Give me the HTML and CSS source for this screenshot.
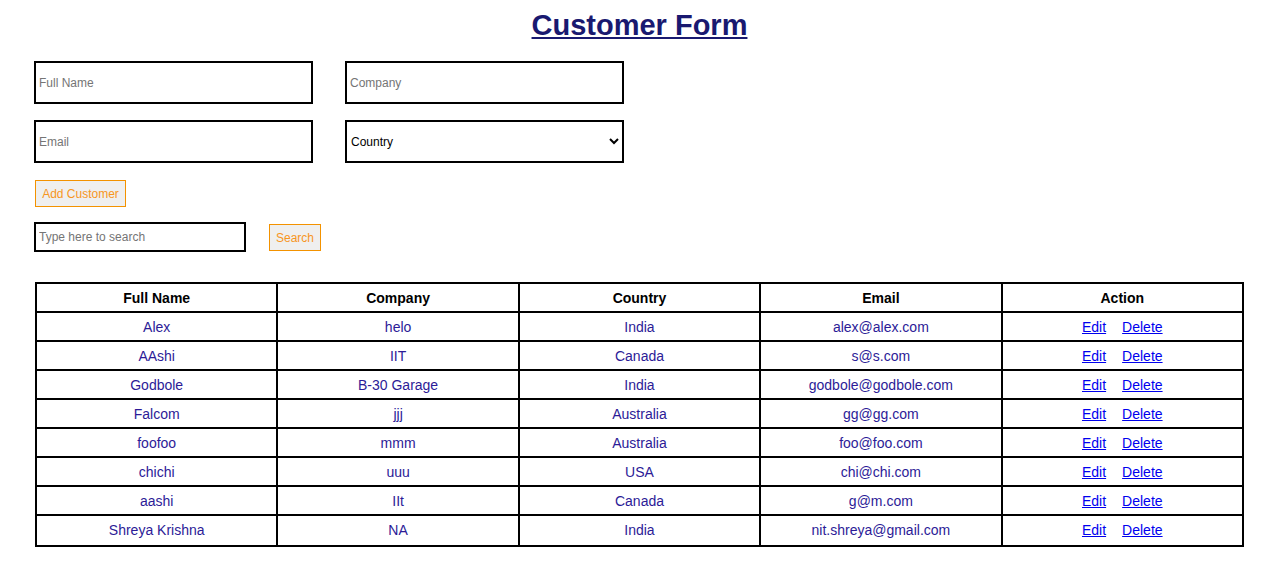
FILE: index.html
```html
<!DOCTYPE html>
<html lang="en">

<head>
    <meta charset="UTF-8">
    <meta name="viewport" content="width=device-width, initial-scale=1.0">
    <title>Customer Form</title>
    <link rel="stylesheet" href="styles.css">
</head>

<body>
    <div class="wrap">
        <h1 class="title">Customer Form</h1>
        <div class="form">
            <div class="row">
                <input type="text" placeholder="Full Name">
                <input type="text" placeholder="Company">
            </div>
            <div class="row">
                <input type="text" placeholder="Email">
                <select>
                    <option>Country</option>
                    <option>India</option>
                    <option>Canada</option>
                    <option>Australia</option>
                    <option>USA</option>
                </select>
            </div>
            <button class="btn add">Add Customer</button>
            <div class="search">
                <input type="text" placeholder="Type here to search">
                <button class="btn">Search</button>
            </div>
        </div>
        <table id="table">
            <thead>
                <tr>
                    <th>Full Name</th>
                    <th>Company</th>
                    <th>Country</th>
                    <th>Email</th>
                    <th>Action</th>
                </tr>
            </thead>
            <tbody>
                <tr>
                    <td>Alex</td><td>helo</td><td>India</td><td>alex@alex.com</td>
                    <td><a href="javascript:;">Edit</a><a href="javascript:;">Delete</a></td>
                </tr>
                <tr>
                    <td>AAshi</td><td>IIT</td><td>Canada</td><td>s@s.com</td>
                    <td><a href="javascript:;">Edit</a><a href="javascript:;">Delete</a></td>
                </tr>
                <tr>
                    <td>Godbole</td><td>B-30 Garage</td><td>India</td><td>godbole@godbole.com</td>
                    <td><a href="javascript:;">Edit</a><a href="javascript:;">Delete</a></td>
                </tr>
                <tr>
                    <td>Falcom</td><td>jjj</td><td>Australia</td><td>gg@gg.com</td>
                    <td><a href="javascript:;">Edit</a><a href="javascript:;">Delete</a></td>
                </tr>
                <tr>
                    <td>foofoo</td><td>mmm</td><td>Australia</td><td>foo@foo.com</td>
                    <td><a href="javascript:;">Edit</a><a href="javascript:;">Delete</a></td>
                </tr>
                <tr>
                    <td>chichi</td><td>uuu</td><td>USA</td><td>chi@chi.com</td>
                    <td><a href="javascript:;">Edit</a><a href="javascript:;">Delete</a></td>
                </tr>
                <tr>
                    <td>aashi</td><td>IIt</td><td>Canada</td><td>g@m.com</td>
                    <td><a href="javascript:;">Edit</a><a href="javascript:;">Delete</a></td>
                </tr>
                <tr>
                    <td>Shreya Krishna</td><td>NA</td><td>India</td><td>nit.shreya@gmail.com</td>
                    <td><a href="javascript:;">Edit</a><a href="javascript:;">Delete</a></td>
                </tr>
            </tbody>
        </table>
    </div>
</body>

</html>
```

FILE: styles.css
```css
* {
    margin: 0;
    padding: 0;
    box-sizing: border-box;
}

body {
    font-family: "Liberation Sans", Arial, sans-serif;
}

.wrap {
    padding: 8px 32px 0 35px;
}

.title {
    text-align: center;
    font-size: 29px;
    line-height: 34px;
    color: #191970;
    text-decoration: underline;
}

.form {
    margin-top: 19px;
}

.form .row {
    display: flex;
    gap: 32px;
    margin-bottom: 16px;
    margin-left: -1px;
}

.form input,
.form select {
    width: 279px;
    height: 43px;
    border: 2.5px solid #000;
    padding: 0 3px;
    font-family: "Liberation Sans", Arial, sans-serif;
    font-size: 12px;
    color: #000;
    background: #fff;
    outline: none;
}

.form input::placeholder {
    color: #757575;
}

.form select {
    padding: 0 4px 0 0;
}

.btn {
    height: 27px;
    padding: 0 6px;
    border: 1px solid #f39200;
    background: #efefef;
    color: #f7961e;
    font-family: "Liberation Sans", Arial, sans-serif;
    font-size: 12px;
}

.add {
    width: 91px;
    margin-top: 1px;
}

.search {
    display: flex;
    align-items: flex-start;
    gap: 23px;
    margin-top: 15px;
    margin-left: -1px;
}

.search input {
    width: 212px;
    height: 30px;
    padding: 0 3px;
}

.search .btn {
    width: 52px;
    margin-top: 2px;
}

#table {
    width: 1209px;
    margin-top: 30px;
    border-collapse: collapse;
    border: 2px solid #000;
    font-size: 14px;
    table-layout: fixed;
}

#table th,
#table td {
    border: 2px solid #000;
    height: 29px;
    text-align: center;
    padding: 0 4px;
}

#table tbody tr:last-child td {
    height: 31px;
    padding-bottom: 2px;
}

#table th {
    color: #000;
}

#table td {
    color: #2c1b97;
}

#table td a {
    color: #0000ee;
    text-decoration: underline;
    margin: 0 8px;
}
```
